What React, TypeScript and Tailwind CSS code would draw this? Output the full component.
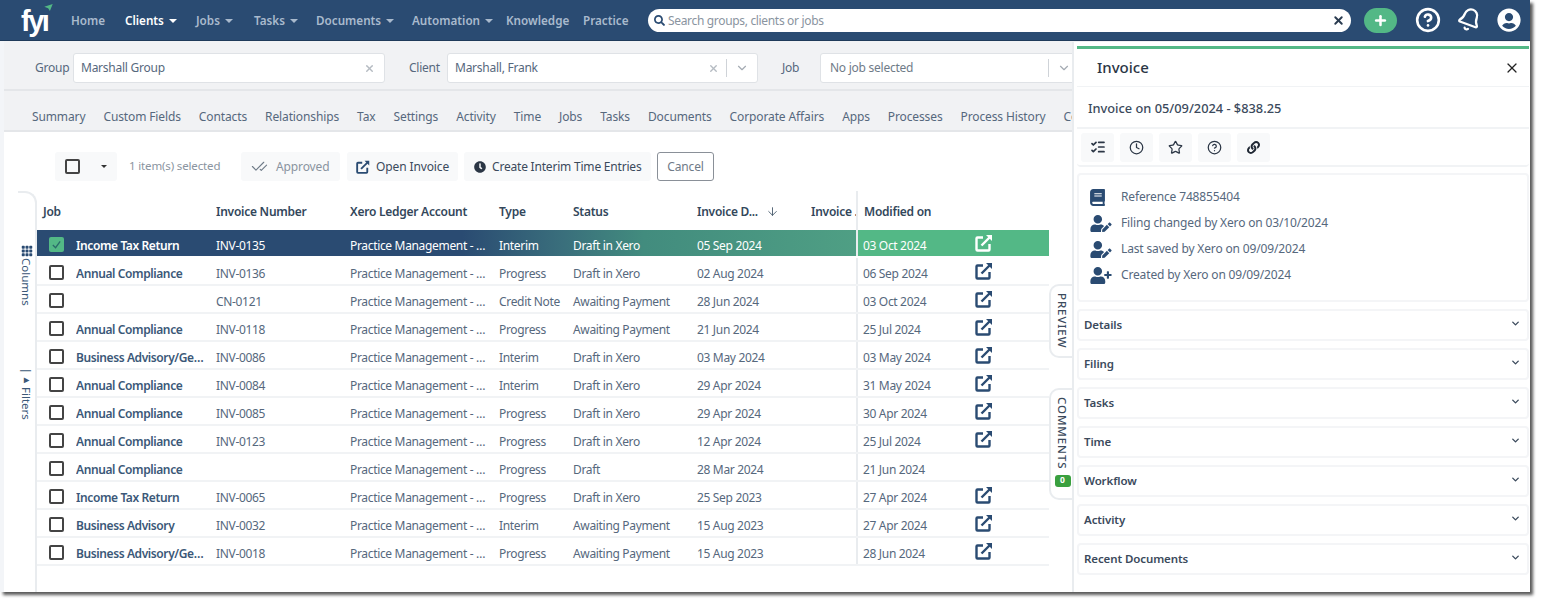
import { ArrowDown, Bell, CheckCheck, ChevronDown, Clock, HelpCircle, ListChecks, Plus, Star, X } from 'lucide-react'
import { BsGrid3X3GapFill } from 'react-icons/bs'
import { FaBook, FaClock, FaLink, FaSearch, FaUserCircle, FaUserEdit, FaUserPlus } from 'react-icons/fa'

const font = { fontFamily: '"Noto Sans", sans-serif' }

const rows = [
  { job: 'Income Tax Return', inv: 'INV-0135', type: 'Interim', status: 'Draft in Xero', date: '05 Sep 2024', mod: '03 Oct 2024', link: true },
  { job: 'Annual Compliance', inv: 'INV-0136', type: 'Progress', status: 'Draft in Xero', date: '02 Aug 2024', mod: '06 Sep 2024', link: true },
  { job: '', inv: 'CN-0121', type: 'Credit Note', status: 'Awaiting Payment', date: '28 Jun 2024', mod: '03 Oct 2024', link: true },
  { job: 'Annual Compliance', inv: 'INV-0118', type: 'Progress', status: 'Awaiting Payment', date: '21 Jun 2024', mod: '25 Jul 2024', link: true },
  { job: 'Business Advisory/General', inv: 'INV-0086', type: 'Interim', status: 'Draft in Xero', date: '03 May 2024', mod: '03 May 2024', link: true },
  { job: 'Annual Compliance', inv: 'INV-0084', type: 'Interim', status: 'Draft in Xero', date: '29 Apr 2024', mod: '31 May 2024', link: true },
  { job: 'Annual Compliance', inv: 'INV-0085', type: 'Progress', status: 'Draft in Xero', date: '29 Apr 2024', mod: '30 Apr 2024', link: true },
  { job: 'Annual Compliance', inv: 'INV-0123', type: 'Progress', status: 'Draft in Xero', date: '12 Apr 2024', mod: '25 Jul 2024', link: true },
  { job: 'Annual Compliance', inv: '', type: 'Progress', status: 'Draft', date: '28 Mar 2024', mod: '21 Jun 2024', link: false },
  { job: 'Income Tax Return', inv: 'INV-0065', type: 'Progress', status: 'Draft in Xero', date: '25 Sep 2023', mod: '27 Apr 2024', link: true },
  { job: 'Business Advisory', inv: 'INV-0032', type: 'Interim', status: 'Awaiting Payment', date: '15 Aug 2023', mod: '27 Apr 2024', link: true },
  { job: 'Business Advisory/General', inv: 'INV-0018', type: 'Progress', status: 'Awaiting Payment', date: '15 Aug 2023', mod: '28 Jun 2024', link: true },
]

const tabs = ['Summary', 'Custom Fields', 'Contacts', 'Relationships', 'Tax', 'Settings', 'Activity', 'Time', 'Jobs', 'Tasks', 'Documents', 'Corporate Affairs', 'Apps', 'Processes', 'Process History', 'Communications']
const sections = ['Details', 'Filing', 'Tasks', 'Time', 'Workflow', 'Activity', 'Recent Documents']

function Caret() {
  return <span className="ml-[5px] inline-block h-0 w-0 border-x-[4px] border-t-[4px] border-x-transparent border-t-current" />
}

function NavItem({ label, left, caret, active }: { label: string; left: number; caret?: boolean; active?: boolean }) {
  return (
    <span className={`absolute top-[12px] flex items-center text-[11.7px] font-semibold ${active ? 'text-white' : 'text-[#a9bacd]'}`} style={{ left }}>
      {label}
      {caret && <Caret />}
    </span>
  )
}

function Checkbox() {
  return <span className="block h-[15px] w-[15px] rounded-[2px] border-2 border-[#444]" />
}

function OpenIcon({ white, small }: { white?: boolean; small?: boolean }) {
  return (
    <svg viewBox="0 0 18 18" className={`${small ? 'h-[14px] w-[14px]' : 'h-[18px] w-[18px]'} ${white ? 'text-white' : 'text-[#2a4b72]'}`} fill="none" stroke="currentColor" strokeWidth="2.4">
      <path d="M8 3.5H2.5a1 1 0 0 0-1 1v11a1 1 0 0 0 1 1h11a1 1 0 0 0 1-1V10" />
      <path d="M6.5 11.5 16 2" />
      <path d="M11 1h6v6z" fill="currentColor" stroke="none" />
    </svg>
  )
}

function Row({ row, selected }: { row: (typeof rows)[number]; selected: boolean }) {
  return (
    <div className={`flex h-[28px] items-center border-b-2 text-[12px] tracking-[-0.33px] ${selected ? 'border-white bg-[linear-gradient(90deg,#2a4b72_0%,#2a4b72_42%,#3a6f7c_52%,#428c7e_60%,#4f9f84_81%)] text-white' : 'border-[#f1f3f5] text-[#56687d]'}`}>
      <div className="flex h-full w-[39px] items-center justify-center pr-[1px] pt-[3px]">
        {selected ? (
          <span className="flex h-[15px] w-[15px] items-center justify-center rounded-[2px] bg-[#53b886]">
            <svg viewBox="0 0 12 12" className="h-[11px] w-[11px]" fill="none" stroke="#2a6b6a" strokeWidth="1.4"><path d="M2 6.5 5 9.5 10 2.5" /></svg>
          </span>
        ) : <Checkbox />}
      </div>
      <div className="flex h-full min-w-0 flex-1 items-center pt-[6px]">
        <div className={`w-[140px] truncate pr-[6px] font-semibold tracking-[-0.4px] ${selected ? 'text-white' : 'text-[#3b5878]'}`}>{row.job}</div>
        <div className="w-[134px]">{row.inv}</div>
        <div className="w-[149px] truncate pr-[8px]">Practice Management - Fees</div>
        <div className="w-[74px]">{row.type}</div>
        <div className="w-[124px]">{row.status}</div>
        <div className="w-[159px]">{row.date}</div>
      </div>
      <div className={`flex h-full w-[119px] items-center border-l-2 border-[#e9ecef] pl-[5px] pt-[6px] ${selected ? 'bg-[#53b886]' : ''}`}>{row.mod}</div>
      <div className={`flex h-full w-[74px] items-center ${selected ? 'bg-[#53b886]' : ''}`}>{row.link && <OpenIcon white={selected} />}</div>
    </div>
  )
}

function ToolButton({ children }: { children: React.ReactNode }) {
  return <span className="flex h-[29px] items-center rounded-[3px] bg-[#f8f9fa] text-[12px] tracking-[-0.12px]">{children}</span>
}

function InfoRow({ icon, text }: { icon: React.ReactNode; text: string }) {
  return (
    <div className="flex h-[26px] items-center">
      <span className="flex w-[31px] items-center text-[#2a4b72]">{icon}</span>
      <span className="text-[12px] tracking-[-0.15px] text-[#56687d]">{text}</span>
    </div>
  )
}

function SideTab({ label, className, children }: { label: string; className: string; children?: React.ReactNode }) {
  return (
    <div className={`absolute left-[1045px] z-10 flex w-[25px] flex-col items-center rounded-l-[10px] border-y-2 border-l-2 border-[#e9ecef] bg-white pt-[7px] ${className}`}>
      <span className="text-[11.5px] font-medium tracking-[0.9px] text-[#3b4a5c] [writing-mode:vertical-rl]">{label}</span>
      {children}
    </div>
  )
}

export default function App() {
  return (
    <div className="h-[604px] w-[1542px] overflow-hidden bg-white" style={font}>
      <div className="relative flex h-[592px] w-[1530px] flex-col bg-[#f3f5f8] shadow-[3px_3px_3px_rgba(0,0,0,0.65)]">

        {/* Top nav */}
        <header className="relative h-[41px] shrink-0 border-b border-[#1f3a5a] bg-[#2a4b72]">
          <span className="absolute left-[21px] top-[1px] text-[29px] font-bold leading-[40px] tracking-[-2.5px] text-white" style={{ fontFamily: '"Liberation Sans", sans-serif' }}>fyı</span>
          <svg viewBox="0 0 12 10" className="absolute left-[44px] top-[4px] h-[7px] w-[9px]" fill="#53b886"><path d="M0 4 12 0 8 10 5.5 6z" /></svg>
          <NavItem label="Home" left={71} />
          <NavItem label="Clients" left={125} caret active />
          <NavItem label="Jobs" left={196} caret />
          <NavItem label="Tasks" left={254} caret />
          <NavItem label="Documents" left={316} caret />
          <NavItem label="Automation" left={412} caret />
          <NavItem label="Knowledge" left={506} />
          <NavItem label="Practice" left={583} />
          <div className="absolute left-[648px] top-[9px] flex h-[23px] w-[703px] items-center rounded-[12px] bg-white px-[6px]">
            <FaSearch className="h-[11px] w-[11px] text-[#2a4b72]" />
            <span className="ml-[3px] flex-1 text-[12px] tracking-[-0.33px] text-[#8a94a0]">Search groups, clients or jobs</span>
            <X className="h-[13px] w-[13px] text-[#2a3b50]" strokeWidth={3.5} />
          </div>
          <span className="absolute left-[1364px] top-[8px] flex h-[25px] w-[33px] items-center justify-center rounded-[13px] bg-[#53b886]">
            <Plus className="h-[15px] w-[15px] text-white" strokeWidth={4} />
          </span>
          <HelpCircle className="absolute left-[1415px] top-[7px] h-[26px] w-[26px] text-white" strokeWidth={2.4} />
          <Bell className="absolute left-[1457px] top-[7px] h-[25px] w-[25px] rotate-[20deg] text-white" strokeWidth={2.2} />
          <FaUserCircle className="absolute left-[1497px] top-[8px] h-[24px] w-[24px] text-white" />
        </header>

        <div className="flex min-h-0 flex-1 flex-col pl-[4px]">
          {/* Group / client / job pickers */}
          <div className="flex h-[50px] shrink-0 items-center border-b-2 border-[#e4e6e9] bg-[#f1f2f4] pt-[6px] text-[12px] tracking-[-0.25px] text-[#56687d]">
            <span className="ml-[31px] w-[38px]">Group</span>
            <div className="flex h-[30px] w-[312px] items-center justify-between rounded-[3px] border border-[#dfe2e6] bg-white px-[7px]">
              Marshall Group
              <X className="mr-[2px] h-[11px] w-[11px] text-[#b5bbc2]" strokeWidth={3} />
            </div>
            <span className="ml-[24px] w-[38px]">Client</span>
            <div className="flex h-[30px] w-[311px] items-center rounded-[3px] border border-[#dfe2e6] bg-white pl-[7px]">
              <span className="flex-1">Marshall, Frank</span>
              <X className="mr-[7px] h-[11px] w-[11px] text-[#b5bbc2]" strokeWidth={3} />
              <span className="h-[18px] w-px bg-[#cfd3d8]" />
              <ChevronDown className="mx-[8px] h-[14px] w-[14px] text-[#a4abb3]" />
            </div>
            <span className="ml-[24px] w-[38px]">Job</span>
            <div className="flex h-[30px] w-[260px] items-center rounded-[3px] border border-[#dfe2e6] bg-white pl-[9px] text-[#6f7b88]">
              <span className="flex-1">No job selected</span>
              <span className="h-[18px] w-px bg-[#cfd3d8]" />
              <ChevronDown className="mx-[8px] h-[14px] w-[14px] text-[#a4abb3]" />
            </div>
          </div>

          {/* Tabs */}
          <nav className="flex h-[41px] shrink-0 items-center gap-[18px] overflow-hidden whitespace-nowrap border-b-2 border-[#e4e6e9] bg-[#f1f2f4] pl-[28px] pt-[12px] text-[12px] tracking-[-0.12px] text-[#56687d]">
            {tabs.map((t) => <span key={t}>{t}</span>)}
          </nav>

          <main className="relative min-h-0 flex-1 bg-white">
            {/* Action bar */}
            <div className="flex h-[59px] items-start pl-[51px] pt-[20px] text-[#3b4a5c]">
              <span className="flex h-[29px] w-[62px] items-center rounded-[3px] bg-[#f8f9fa] pl-[10px]">
                <Checkbox />
                <span className="ml-[21px] h-0 w-0 border-x-[3px] border-t-[3px] border-x-transparent border-t-[#333]" />
              </span>
              <span className="ml-[12px] mt-[5px] w-[112px] text-[11.5px] tracking-[-0.15px] text-[#8a94a0]">1 item(s) selected</span>
              <ToolButton>
                <span className="flex w-[99px] items-center pl-[9px] text-[#8a94a0]"><CheckCheck className="mr-[7px] h-[17px] w-[19px] text-[#6f7b88]" strokeWidth={1.6} />Approved</span>
              </ToolButton>
              <span className="w-[7px]" />
              <ToolButton>
                <span className="flex w-[111px] items-center gap-[6px] pl-[9px]"><OpenIcon small white={false} />Open Invoice</span>
              </ToolButton>
              <span className="w-[6px]" />
              <ToolButton>
                <span className="flex w-[187px] items-center pl-[10px] tracking-[-0.2px]"><FaClock className="mr-[6px] h-[12px] w-[12px] text-[#2b3645]" />Create Interim Time Entries</span>
              </ToolButton>
              <span className="w-[6px]" />
              <span className="flex h-[29px] w-[57px] items-center justify-center rounded-[3px] border border-[#8a9098] text-[12px] tracking-[-0.12px] text-[#6f7b88]">Cancel</span>
            </div>

            <div className="flex">
              {/* Columns / filters rail */}
              <div className="ml-[14px] flex h-[401px] w-[19px] flex-col items-center rounded-tr-[12px] border-r-2 border-t-2 border-[#e9ecef] pt-[52px] text-[11.5px] text-[#3b5878]">
                <BsGrid3X3GapFill className="h-[12px] w-[12px] shrink-0 text-[#2a4b72]" />
                <span className="mt-[1px] [writing-mode:vertical-rl]">Columns</span>
                <span className="mt-[62px] flex items-center [writing-mode:vertical-rl]">
                  <span className="mb-[3px] text-[10px] font-bold">|▸</span>Filters
                </span>
              </div>

              {/* Invoice table */}
              <div className="w-[1012px]">
                <div className="flex h-[39px] items-center pt-[2px] text-[12px] font-semibold tracking-[-0.25px] text-[#33475b]">
                  <div className="w-[179px] pl-[6px]">Job</div>
                  <div className="w-[134px]">Invoice Number</div>
                  <div className="w-[149px]">Xero Ledger Account</div>
                  <div className="w-[74px]">Type</div>
                  <div className="w-[124px]">Status</div>
                  <div className="flex w-[114px] items-center">Invoice D...<ArrowDown className="ml-[8px] h-[13px] w-[13px]" strokeWidth={1.5} /></div>
                  <div className="w-[45px] overflow-hidden whitespace-nowrap">Invoice ...</div>
                  <div className="-mt-[2px] flex h-[39px] flex-1 items-center border-l-2 border-[#e9ecef] pl-[6px] pt-[2px]">Modified on</div>
                </div>
                {rows.map((r, i) => <Row key={i} row={r} selected={i === 0} />)}
              </div>
            </div>

            <SideTab label="PREVIEW" className="top-[152px] h-[74px]" />
            <SideTab label="COMMENTS" className="top-[256px] h-[112px]">
              <span className="mt-[5px] flex h-[12px] w-[16px] items-center justify-center rounded-[3px] bg-[#3aa03f] text-[8.5px] font-bold text-white">0</span>
            </SideTab>
          </main>
        </div>

        {/* Invoice preview panel */}
        <aside className="absolute bottom-0 left-[1072px] right-0 top-[42px] z-20 border-l-2 border-[#e9ecef] bg-white pl-[3px] pr-[1px]">
          <div className="mt-[4px] flex h-[41px] items-center justify-between border-b border-t-[3px] border-[#f1f3f5] border-t-[#53b886] pl-[20px] pr-[9px]">
            <span className="text-[15px] font-medium text-[#2b3645]">Invoice</span>
            <X className="h-[16px] w-[16px] text-[#222]" strokeWidth={1.8} />
          </div>
          <div className="flex h-[42px] items-center border-b-2 border-[#f1f3f5] pl-[11px] pt-[4px] text-[12.8px] font-medium text-[#3b4a5c]">Invoice on 05/09/2024 - $838.25</div>
          <div className="flex h-[38px] items-center gap-[6px] rounded-b-[4px] border-b-2 border-[#f1f3f5] pl-[4px] text-[#2b3645]">
            <span className="flex h-[29px] w-[33px] items-center justify-center rounded-[3px] bg-[#f8f9fa]"><ListChecks className="h-[16px] w-[16px]" strokeWidth={2.6} /></span>
            <span className="flex h-[29px] w-[33px] items-center justify-center rounded-[3px] bg-[#f8f9fa]"><Clock className="h-[15px] w-[15px]" strokeWidth={2} /></span>
            <span className="flex h-[29px] w-[33px] items-center justify-center rounded-[3px] bg-[#f8f9fa]"><Star className="h-[15px] w-[15px]" strokeWidth={2} /></span>
            <span className="flex h-[29px] w-[33px] items-center justify-center rounded-[3px] bg-[#f8f9fa]"><HelpCircle className="h-[15px] w-[15px]" strokeWidth={2} /></span>
            <span className="flex h-[29px] w-[33px] items-center justify-center rounded-[3px] bg-[#f8f9fa]"><FaLink className="h-[13px] w-[13px] text-[#1f2733]" /></span>
          </div>
          <div className="mt-[6px] h-[129px] rounded-[4px] border-2 border-[#f4f5f7] pl-[11px] pt-[9px]">
            <InfoRow icon={<FaBook className="h-[17px] w-[15px]" />} text="Reference 748855404" />
            <InfoRow icon={<FaUserEdit className="h-[17px] w-[22px]" />} text="Filing changed by Xero on 03/10/2024" />
            <InfoRow icon={<FaUserEdit className="h-[17px] w-[22px]" />} text="Last saved by Xero on 09/09/2024" />
            <InfoRow icon={<FaUserPlus className="h-[17px] w-[22px]" />} text="Created by Xero on 09/09/2024" />
          </div>
          <div className="mt-[7px] flex flex-col gap-[7px]">
            {sections.map((s) => (
              <div key={s} className="flex h-[32px] items-center justify-between rounded-[4px] border-2 border-[#f4f5f7] pl-[5px] pr-[6px] text-[11.5px] font-semibold tracking-[-0.1px] text-[#3b4a5c]">
                {s}
                <ChevronDown className="mb-[4px] h-[11px] w-[11px]" strokeWidth={3} />
              </div>
            ))}
          </div>
        </aside>
      </div>
    </div>
  )
}
